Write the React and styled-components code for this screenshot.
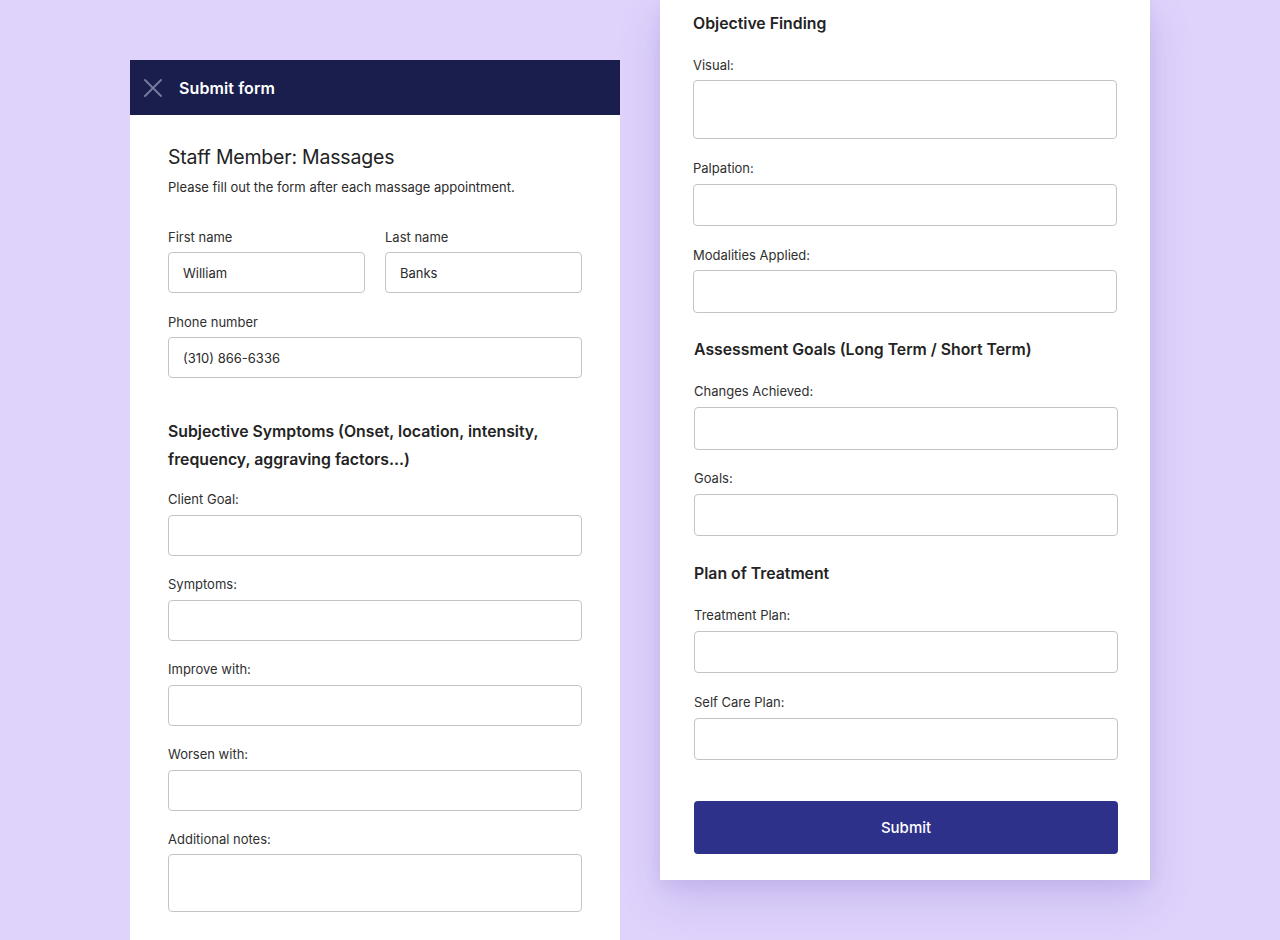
import React from "react";
import styled, { createGlobalStyle } from "styled-components";

const Global = createGlobalStyle`
  * { box-sizing: border-box; }
  html, body { margin: 0; padding: 0; }
  body {
    background: #dfd3fc;
    font-family: Inter, "Noto Sans", "Liberation Sans", sans-serif;
    color: #222;
    -webkit-font-smoothing: antialiased;
  }
`;

const Stage = styled.div`
  width: 1280px;
  height: 940px;
  overflow: hidden;
  display: flex;
  align-items: flex-start;
  gap: 40px;
  padding-left: 130px;
`;

const LeftPanel = styled.section`
  width: 490px;
  margin-top: 60px;
  height: 880px;
  background: #fff;
  display: flex;
  flex-direction: column;
`;

const RightPanel = styled.section`
  width: 490px;
  height: 880px;
  background: #fff;
  padding: 10px 33px 26px;
  display: flex;
  flex-direction: column;
  box-shadow: 0 18px 40px rgba(90, 60, 170, 0.18), 0 4px 14px rgba(90, 60, 170, 0.08);
`;

const Header = styled.header`
  height: 55px;
  background: #1a1e4d;
  display: flex;
  align-items: center;
  padding-left: 13px;
  gap: 16px;
`;

const HeaderTitle = styled.h1`
  margin: 0;
  font-size: 16px;
  font-weight: 600;
  color: #fff;
  letter-spacing: 0.1px;
`;

const CloseButton = styled.button`
  width: 20px;
  height: 20px;
  padding: 0;
  border: 0;
  background: none;
  display: flex;
  align-items: center;
  justify-content: center;
`;

const Body = styled.div`
  padding: 30px 38px 0;
  display: flex;
  flex-direction: column;
`;

const Title = styled.h2`
  margin: 0;
  font-size: 19.5px;
  line-height: 24px;
  font-weight: 400;
  color: #222;
  letter-spacing: -0.2px;
`;

const Subtitle = styled.p`
  margin: 9px 0 0;
  font-size: 13px;
  line-height: 18px;
  color: #2b2b2b;
`;

const Row = styled.div`
  display: grid;
  grid-template-columns: 1fr 1fr;
  gap: 20px;
  margin-top: ${(p) => p.$mt || 0}px;
`;

const Field = styled.div`
  display: flex;
  flex-direction: column;
  margin-top: ${(p) => p.$mt || 0}px;
`;

const Label = styled.label`
  font-size: 13px;
  line-height: 18px;
  color: #2f2f2f;
  margin-bottom: ${(p) => p.$gap || 6}px;
`;

const Input = styled.div`
  height: ${(p) => p.$h || 41}px;
  border: 1px solid #c4c4c8;
  border-radius: 4px;
  background: #fff;
  display: flex;
  align-items: center;
  padding: 0 14px;
  font-size: 13px;
  color: #2a2a2a;
`;

const SectionHeading = styled.h3`
  margin: ${(p) => p.$mt || 0}px 0 0;
  font-size: 15.8px;
  line-height: 28px;
  font-weight: 600;
  color: #232323;
  letter-spacing: 0;
`;

const SubmitButton = styled.button`
  margin-top: 41px;
  height: 53px;
  width: 100%;
  border: 0;
  border-radius: 4px;
  background: #2e318a;
  color: #fff;
  font-family: inherit;
  font-size: 15px;
  font-weight: 500;
`;

const Shift = styled.div`
  display: flex;
  flex-direction: column;
  margin-left: ${(p) => p.$x || 0}px;
  margin-right: ${(p) => -(p.$x || 0)}px;
`;

function XIcon() {
  return (
    <svg width="20" height="20" viewBox="0 0 20 20" fill="none">
      <path d="M2 2 L18 18 M18 2 L2 18" stroke="#767a9e" strokeWidth="2" strokeLinecap="round" />
    </svg>
  );
}

function F({ label, value, h, mt, gap }) {
  return (
    <Field $mt={mt}>
      <Label $gap={gap}>{label}</Label>
      <Input $h={h}>{value}</Input>
    </Field>
  );
}

export default function App() {
  return (
    <>
      <Global />
      <Stage>
        <LeftPanel>
          <Header>
            <CloseButton aria-label="Close">
              <XIcon />
            </CloseButton>
            <HeaderTitle>Submit form</HeaderTitle>
          </Header>
          <Body>
            <Title>Staff Member: Massages</Title>
            <Subtitle>Please fill out the form after each massage appointment.</Subtitle>
            <Row $mt={32}>
              <F label="First name" value="William" />
              <F label="Last name" value="Banks" />
            </Row>
            <F label="Phone number" value="(310) 866-6336" mt={20} />
            <SectionHeading $mt={40}>
              Subjective Symptoms (Onset, location, intensity, frequency, aggraving factors...)
            </SectionHeading>
            <F label="Client Goal:" h={41} mt={16} gap={7} />
            <F label="Symptoms:" h={41} mt={19} gap={7} />
            <F label="Improve with:" h={41} mt={19} gap={7} />
            <F label="Worsen with:" h={41} mt={19} gap={7} />
            <F label="Additional notes:" h={58} mt={19} gap={6} />
          </Body>
        </LeftPanel>
        <RightPanel>
          <SectionHeading>Objective Finding</SectionHeading>
          <F label="Visual:" h={59} mt={18} />
          <F label="Palpation:" h={42} mt={20} gap={7} />
          <F label="Modalities Applied:" h={43} mt={20} gap={6} />
          <Shift $x={1}>
            <SectionHeading $mt={23}>Assessment Goals (Long Term / Short Term)</SectionHeading>
            <F label="Changes Achieved:" h={43} mt={18} gap={7} />
            <F label="Goals:" h={42} mt={19} gap={7} />
            <SectionHeading $mt={24}>Plan of Treatment</SectionHeading>
            <F label="Treatment Plan:" h={42} mt={18} gap={7} />
            <F label="Self Care Plan:" h={42} mt={20} gap={7} />
            <SubmitButton>Submit</SubmitButton>
          </Shift>
        </RightPanel>
      </Stage>
    </>
  );
}
